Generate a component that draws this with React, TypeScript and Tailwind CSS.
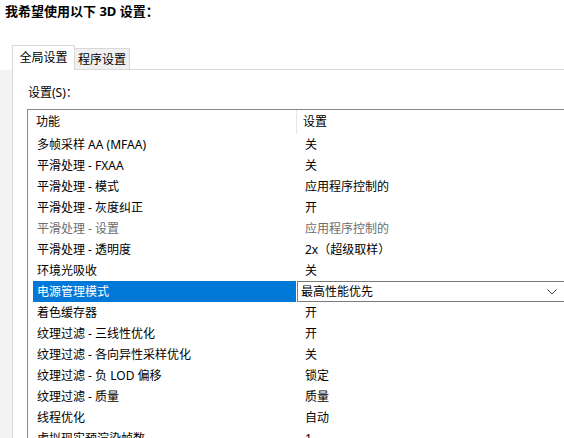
const rows: { name: string; value: string; disabled?: boolean; selected?: boolean }[] = [
  { name: "多帧采样 AA (MFAA)", value: "关" },
  { name: "平滑处理 - FXAA", value: "关" },
  { name: "平滑处理 - 模式", value: "应用程序控制的" },
  { name: "平滑处理 - 灰度纠正", value: "开" },
  { name: "平滑处理 - 设置", value: "应用程序控制的", disabled: true },
  { name: "平滑处理 - 透明度", value: "2x（超级取样）" },
  { name: "环境光吸收", value: "关" },
  { name: "电源管理模式", value: "最高性能优先", selected: true },
  { name: "着色缓存器", value: "开" },
  { name: "纹理过滤 - 三线性优化", value: "开" },
  { name: "纹理过滤 - 各向异性采样优化", value: "关" },
  { name: "纹理过滤 - 负 LOD 偏移", value: "锁定" },
  { name: "纹理过滤 - 质量", value: "质量" },
  { name: "线程优化", value: "自动" },
  { name: "虚拟现实预渲染帧数", value: "1" },
];

const font = { fontFamily: '"Noto Sans", "Noto Sans CJK SC", sans-serif' };

export default function App() {
  return (
    <div
      className="flex h-[438px] w-[564px] flex-col overflow-hidden bg-white text-[12px] text-black"
      style={font}
    >
      <div className="flex h-[24px] shrink-0 items-center pl-[5px] text-[13px] font-bold">
        我希望使用以下 3D 设置：
      </div>
      <div className="h-[21px] shrink-0" />

      {/* tabs */}
      <div className="flex h-[25px] shrink-0 items-end">
        <div className="h-full w-[12px] border-b border-transparent" />
        <div className="flex h-[25px] w-[63px] items-center justify-center border-x border-t border-[#d9d9d9] bg-white pb-[1px]">
          全局设置
        </div>
        <div className="flex h-[22px] w-[55px] items-center justify-center border-b border-r border-t border-[#d9d9d9] bg-[#f0f0f0] pt-[1px]">
          程序设置
        </div>
        <div className="h-full flex-1 border-b border-[#d9d9d9]" />
      </div>

      <div className="flex min-h-0 flex-1">
        <div className="w-[12px] shrink-0 bg-[#f3f3f3]" />
        <div className="flex min-w-0 flex-1 flex-col border-l border-[#d9d9d9] bg-white pl-[14px]">
          <div className="mt-[15px] flex h-[16px] items-center pl-[1px]">设置(S)：</div>
          <div className="mt-[8px] w-[560px] shrink-0 border-l border-t border-[#828790]">
            <div className="flex h-[24px] items-center">
              <div className="w-[268px] shrink-0 pl-[8px]">功能</div>
              <div className="flex h-full items-center border-l border-[#e5e5e5] pl-[6px]">设置</div>
            </div>
            {rows.map((r) => (
              <div key={r.name} className="flex h-[21px] items-center pl-[5px]">
                <div
                  className={`flex h-full w-[263px] shrink-0 items-center pl-[4px] ${
                    r.selected ? "bg-[#0078d7] text-white" : r.disabled ? "text-[#6d6d6d]" : ""
                  }`}
                >
                  {r.name}
                </div>
                {r.selected ? (
                  <div className="ml-[1px] flex h-full w-[272px] items-center justify-between border border-[#7a7a7a] pl-[3px] pr-[11px]">
                    <span>{r.value}</span>
                    <svg width="10" height="6" viewBox="0 0 10 6" fill="none">
                      <path d="M0.5 0.5 L5 5 L9.5 0.5" stroke="#444" strokeWidth="1" />
                    </svg>
                  </div>
                ) : (
                  <div className={`pl-[9px] ${r.disabled ? "text-[#6d6d6d]" : ""}`}>{r.value}</div>
                )}
              </div>
            ))}
          </div>
        </div>
      </div>
    </div>
  );
}
